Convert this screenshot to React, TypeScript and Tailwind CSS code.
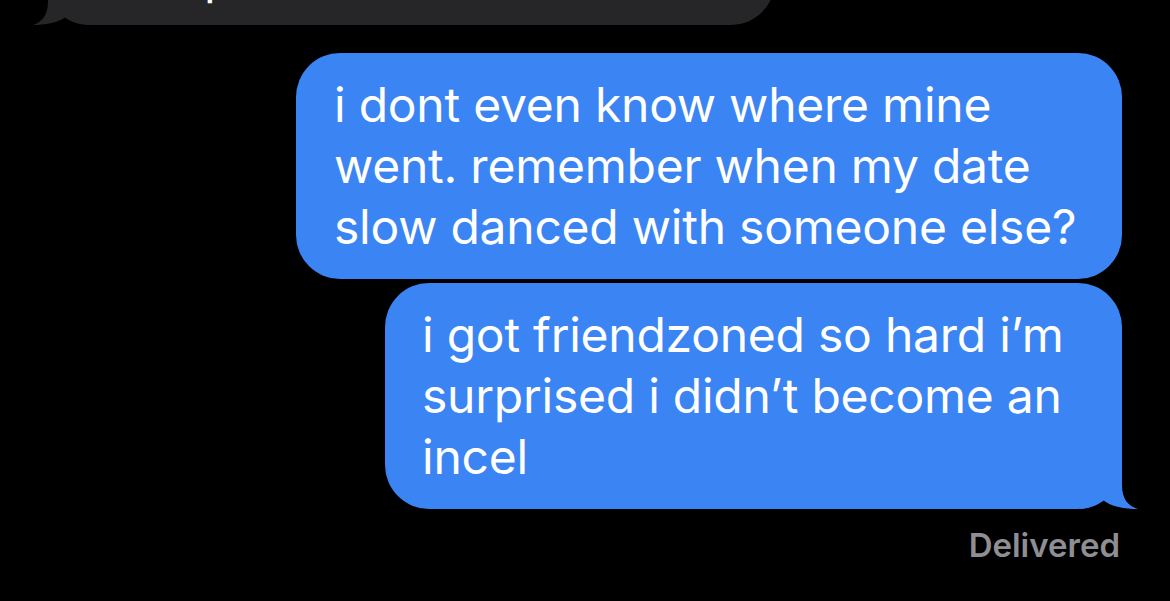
import React from "react";

const font = { fontFamily: "Inter, 'Noto Sans', sans-serif" };

function TailRight({ color }: { color: string }) {
  return (
    <svg
      className="absolute right-[-18px] bottom-0"
      width="60"
      height="50"
      viewBox="0 0 60 50"
    >
      <path
        d="M0 0 L42 0 L42 26 C42 40 48 47 58 50 C46 50 30 48 22 40 C16 46 8 50 0 50 Z"
        fill={color}
      />
    </svg>
  );
}

function TailLeft({ color }: { color: string }) {
  return (
    <svg
      className="absolute left-[-15px] bottom-0"
      width="60"
      height="50"
      viewBox="0 0 60 50"
      style={{ transform: "scaleX(-1)" }}
    >
      <path
        d="M0 0 L42 0 L42 26 C42 40 48 47 57 50 C46 50 30 48 22 40 C16 46 8 50 0 50 Z"
        fill={color}
      />
    </svg>
  );
}

export default function App() {
  return (
    <div
      className="w-[1170px] h-[601px] bg-black overflow-hidden flex flex-col"
      style={font}
    >
      <div className="pl-[45px]">
        <div className="relative w-[730px] h-[226px] -mt-[201px] bg-[#262628] rounded-[44px] flex items-end pl-[36px] pb-[18px] text-[48px] leading-[61px] text-white">
          <span>lmao prom was so weird</span>
          <TailLeft color="#262628" />
        </div>
      </div>

      <div className="flex flex-col items-end pr-[48px] mt-[28px]">
        <div className="w-[826px] h-[226px] bg-[#3b84f4] rounded-[44px] pl-[38px] py-[21px] text-[48px] leading-[61px] text-white tracking-[-0.005em] whitespace-nowrap">
          i dont even know where mine
          <br />
          went. remember when my date
          <br />
          slow danced with someone else?
        </div>
        <div className="relative mt-[4px] w-[737px] h-[226px] bg-[#3b84f4] rounded-[44px] pl-[37px] py-[21px] text-[48px] leading-[61px] text-white tracking-[-0.005em] whitespace-nowrap">
          i got friendzoned so hard i’m
          <br />
          surprised i didn’t become an
          <br />
          incel
          <TailRight color="#3b84f4" />
        </div>
        <div className="mt-[16px] pr-[2px] text-[33px] leading-[40px] font-semibold text-[#8e8e93]">
          Delivered
        </div>
      </div>
    </div>
  );
}
